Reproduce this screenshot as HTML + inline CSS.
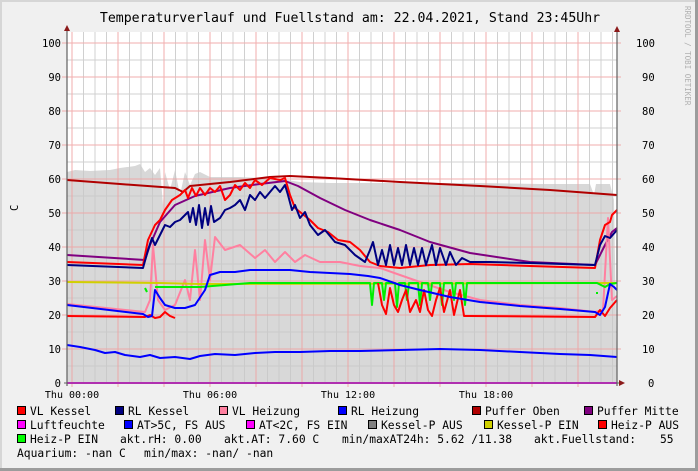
<!DOCTYPE html>
<html><head><meta charset="utf-8"><style>
body{margin:0;width:698px;height:471px;overflow:hidden;background:#f0f0f0}
svg{display:block}
text{font-family:"DejaVu Sans Mono","Liberation Mono",monospace;fill:#000}
</style></head><body>
<svg width="698" height="471" viewBox="0 0 698 471" xmlns="http://www.w3.org/2000/svg">
<rect x="0" y="0" width="698" height="471" fill="#f0f0f0"/>
<rect x="0" y="0" width="698" height="2" fill="#d6d6d6"/>
<rect x="0" y="0" width="2" height="471" fill="#d6d6d6"/>
<rect x="695" y="0" width="3" height="471" fill="#9c9c9c"/>
<rect x="0" y="468" width="698" height="3" fill="#9c9c9c"/>
<text x="350" y="22" font-size="13.2" text-anchor="middle">Temperaturverlauf und Fuellstand am: 22.04.2021, Stand 23:45Uhr</text>
<text font-size="7.5" style="fill:#b0b0b0" transform="translate(685,6) rotate(90)">RRDTOOL / TOBI OETIKER</text>
<rect x="67" y="32" width="550" height="351" fill="#fff"/>
<polygon fill="#d8d8d8" points="67,383 67,172 75,170 90,171 110,170 120,168 135,166 140,164 145,172 150,168 155,175 160,168 163,205 165,172 170,190 175,170 180,195 185,172 190,185 195,174 200,172 210,177 240,177 260,178 280,179 300,182 330,183 400,183 480,183 540,184 590,184 594,195 596,184 610,184 614,200 617,383"/>
<g stroke-width="1" opacity="0.85">
<g stroke="#c8c8c8">
<path d="M67,60H617M67,94H617M67,128H617M67,162H617M67,196H617M67,230H617M67,264H617M67,298H617M67,332H617M67,366H617"/>
<path d="M83.5,32V383M95,32V383M106.5,32V383M129.5,32V383M141,32V383M152.5,32V383M175.5,32V383M187,32V383M198.5,32V383M221.5,32V383M233,32V383M244.5,32V383M267.5,32V383M279,32V383M290.5,32V383M313.5,32V383M325,32V383M336.5,32V383M359.5,32V383M371,32V383M382.5,32V383M405.5,32V383M417,32V383M428.5,32V383M451.5,32V383M463,32V383M474.5,32V383M497.5,32V383M509,32V383M520.5,32V383M543.5,32V383M555,32V383M566.5,32V383M589.5,32V383M601,32V383M612.5,32V383"/>
</g>
<g stroke="#f0a0a0">
<path d="M62,43H621M62,77H621M62,111H621M62,145H621M62,179H621M62,213H621M62,247H621M62,281H621M62,315H621M62,349H621"/>
<path d="M72,32V387M118,32V387M164,32V387M210,32V387M256,32V387M302,32V387M348,32V387M394,32V387M440,32V387M486,32V387M532,32V387M578,32V387"/>
</g>
</g>
<g fill="none" stroke-width="2" stroke-linejoin="round">
<polyline stroke="#b00000" points="67,180 120,184 175,188 183,192 190,186 230,182 270,177 290,176 330,178 400,182 480,186 550,190 617,195"/>
<polyline stroke="#800080" points="67,255 145,260 150,245 160,222 175,205 195,196 230,188 260,184 285,181 298,186 320,198 345,210 370,220 400,230 430,242 470,253 530,262 595,265 605,245 612,232 617,228"/>
<polyline stroke="#ff80a0" points="67,304 145,312 150,300 153,245 158,300 165,310 175,305 185,280 190,300 195,250 200,300 205,240 210,280 215,237 225,250 240,245 255,258 265,250 275,262 285,252 295,262 305,255 320,262 340,262 360,266 380,268 400,275 420,282 450,292 480,300 520,305 560,308 595,312 603,310 608,218 612,300 617,296"/>
<polyline style="stroke:#d0d000" points="67,282 160,283 200,284 617,283"/>
<polyline stroke="#00ee00" points="145,288 147,292"/>
<polyline stroke="#00ee00" points="155,287 200,287 250,283 370,283 372,305 374,283 382,283 384,300 386,283 395,283 397,307 399,283 405,283 407,300 409,283 418,283 420,305 422,283 428,283 430,300 432,283 440,283 442,305 444,283 452,283 454,300 456,283 463,283 465,305 467,283 480,283 597,283 605,287 610,284 617,283"/>
<polyline stroke="#00ee00" points="596,293 598,293"/>
<polyline stroke="#ff0000" points="67,316 145,317 150,315 155,318 160,317 165,312 170,316 175,318"/>
<polyline stroke="#ff0000" points="378,283 382,305 386,314 390,288 394,305 398,312 402,300 406,290 410,312 416,300 420,312 424,290 428,310 432,316 436,300 440,288 444,312 450,290 454,315 460,290 464,316 470,316 595,317 600,310 605,316 610,308 617,300"/>
<polyline stroke="#ff0000" points="67,262 143,265 148,240 155,225 160,220 165,210 172,200 180,195 185,190 188,198 192,188 196,196 200,188 205,195 210,188 215,192 220,186 225,200 230,195 235,185 240,190 245,183 250,188 255,180 262,185 270,178 280,180 285,178 290,195 295,208 300,212 310,220 318,228 328,232 338,240 350,242 360,250 370,262 380,266 400,268 430,265 470,264 530,266 595,268 600,240 605,225 610,222 612,215 617,210"/>
<polyline stroke="#000080" points="67,265 143,268 148,250 152,238 155,245 160,235 165,225 170,227 175,222 180,220 185,215 188,212 190,222 193,208 196,225 199,205 202,228 205,208 208,225 211,206 214,222 220,218 225,210 230,208 235,205 240,200 245,210 250,195 255,200 260,192 265,198 270,192 275,186 280,192 285,185 288,195 292,210 295,205 300,218 305,212 310,225 318,235 325,230 335,242 345,245 355,255 365,262 370,250 373,242 378,265 382,250 386,265 390,245 394,265 398,248 402,265 406,245 410,265 414,248 418,265 422,248 426,265 432,245 436,265 440,248 446,265 450,252 456,265 462,258 470,262 490,262 530,263 595,265 600,245 605,236 610,238 617,230"/>
<polyline stroke="#0000ff" points="67,305 143,314 148,317 152,316 155,290 160,298 165,305 175,308 185,308 195,305 205,290 210,275 220,272 235,272 250,270 270,270 290,270 310,272 330,273 350,274 368,276 380,278 400,285 420,290 450,297 480,302 520,306 560,309 595,312 600,315 605,307 610,284 614,287 617,290"/>
<polyline stroke="#0000ff" points="67,345 80,347 95,350 105,353 115,352 125,355 140,357 150,355 160,358 175,357 190,359 200,356 215,354 235,355 255,353 275,352 300,352 330,351 360,351 400,350 440,349 480,350 520,352 560,354 590,355 617,357"/>
<line x1="67" y1="383" x2="617" y2="383" stroke="#ff00ff"/>
</g>
<path d="M67,30V386M617,30V386" stroke="#606060" stroke-width="1.2"/>
<path d="M64,383H622" stroke="#606060"/>
<polygon points="64,31 70,31 67,25" fill="#8b1a1a"/>
<polygon points="617,26 614,32 620,32" fill="#8b1a1a"/>
<polygon points="619,380 619,386 625,383" fill="#8b1a1a"/>
<g font-size="10.5" text-anchor="end">
<text x="61" y="47">100</text><text x="61" y="81">90</text><text x="61" y="115">80</text><text x="61" y="149">70</text><text x="61" y="183">60</text><text x="61" y="217">50</text><text x="61" y="251">40</text><text x="61" y="285">30</text><text x="61" y="319">20</text><text x="61" y="353">10</text><text x="61" y="387">0</text>
</g>
<g font-size="10.5">
<text x="636" y="47">100</text><text x="642" y="81">90</text><text x="642" y="115">80</text><text x="642" y="149">70</text><text x="642" y="183">60</text><text x="642" y="217">50</text><text x="642" y="251">40</text><text x="642" y="285">30</text><text x="642" y="319">20</text><text x="642" y="353">10</text><text x="648" y="387">0</text>
</g>
<text font-size="10.5" transform="translate(18,211) rotate(-90)">C</text>
<g font-size="10" text-anchor="middle">
<text x="72" y="398">Thu 00:00</text><text x="210" y="398">Thu 06:00</text><text x="348" y="398">Thu 12:00</text><text x="486" y="398">Thu 18:00</text>
</g>
<g stroke="#000" stroke-width="1">
<rect x="17.5" y="406.5" width="8" height="8" fill="#ff0000"/>
<rect x="115.5" y="406.5" width="8" height="8" fill="#000080"/>
<rect x="219.5" y="406.5" width="8" height="8" fill="#ff80a0"/>
<rect x="338.5" y="406.5" width="8" height="8" fill="#0000ff"/>
<rect x="472.5" y="406.5" width="8" height="8" fill="#b00000"/>
<rect x="584.5" y="406.5" width="8" height="8" fill="#800080"/>
<rect x="17.5" y="420.5" width="8" height="8" fill="#ff00ff"/>
<rect x="124.5" y="420.5" width="8" height="8" fill="#0000ff"/>
<rect x="246.5" y="420.5" width="8" height="8" fill="#ff00ff"/>
<rect x="368.5" y="420.5" width="8" height="8" fill="#808080"/>
<rect x="484.5" y="420.5" width="8" height="8" fill="#d0d000"/>
<rect x="598.5" y="420.5" width="8" height="8" fill="#ff0000"/>
<rect x="17.5" y="434.5" width="8" height="8" fill="#00ff00"/>
</g>
<g font-size="11.3">
<text x="30" y="415">VL Kessel</text><text x="128" y="415">RL Kessel</text><text x="232" y="415">VL Heizung</text><text x="351" y="415">RL Heizung</text><text x="485" y="415">Puffer Oben</text><text x="597" y="415">Puffer Mitte</text>
<text x="30" y="429">Luftfeuchte</text><text x="137" y="429">AT&gt;5C, FS AUS</text><text x="259" y="429">AT&lt;2C, FS EIN</text><text x="381" y="429">Kessel-P AUS</text><text x="497" y="429">Kessel-P EIN</text><text x="611" y="429">Heiz-P AUS</text>
<text x="30" y="443">Heiz-P EIN</text><text x="120" y="443">akt.rH: 0.00</text><text x="224" y="443">akt.AT: 7.60 C</text><text x="342" y="443">min/maxAT24h: 5.62 /11.38</text><text x="534" y="443">akt.Fuellstand:</text><text x="660" y="443">55</text>
<text x="17" y="457">Aquarium: -nan C</text><text x="144" y="457">min/max: -nan/ -nan</text>
</g>
</svg>
</body></html>
